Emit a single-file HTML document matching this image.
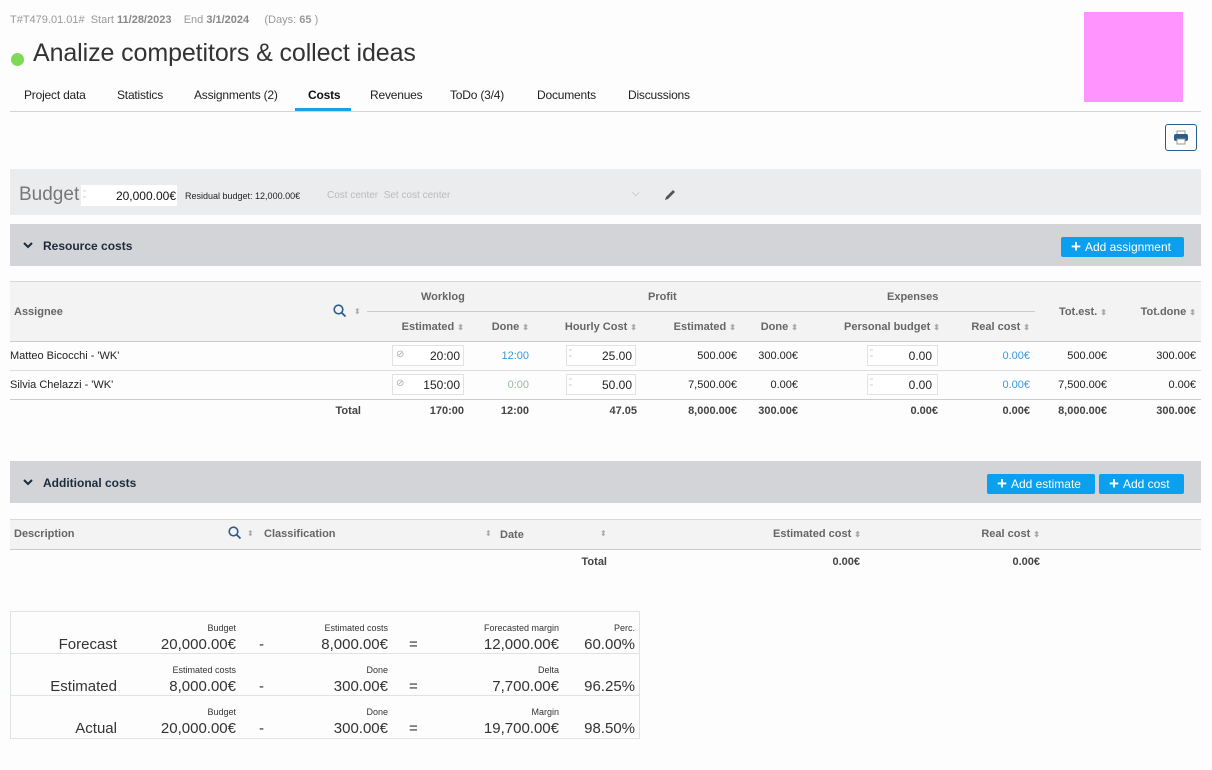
<!DOCTYPE html>
<html><head><meta charset="utf-8">
<style>
*{margin:0;padding:0;box-sizing:border-box}
body{width:1212px;height:770px;background:#fdfdfd;font-family:"Liberation Sans",Arial,sans-serif;position:relative;overflow:hidden;color:#222}
.a{position:absolute;white-space:nowrap}
.r{position:absolute;white-space:nowrap;text-align:right}
.h{font-size:11px;font-weight:bold;color:#666}
.c{font-size:11px;color:#222}
.sort{color:#aaa;font-size:8px}
.inp{position:absolute;background:#fff;border:1px solid #e2e2e2;height:21px}
.btn{position:absolute;background:#0aa0ef;color:#fff;font-size:12px;height:20px;line-height:20px;border-radius:2px;padding-left:10px}
.btn b{font-size:17px;font-weight:bold;vertical-align:-1px;margin-right:4px}
.line{position:absolute;height:1px;background:#ddd}
.sm{font-size:9px;color:#333}
.big{font-size:15px;color:#333}
</style></head><body>

<div class="a" style="left:10px;top:14px;font-size:11px;color:#999">T#T479.01.01# &nbsp;Start <b style="color:#888">11/28/2023</b> &nbsp;&nbsp;&nbsp;End <b style="color:#888">3/1/2024</b> &nbsp;&nbsp;&nbsp;&nbsp;(Days: <b>65</b> )</div>
<div class="a" style="left:11px;top:53px;width:13px;height:13px;border-radius:50%;background:#7ed957"></div>
<div class="a" style="left:33px;top:39px;font-size:25px;color:#333;letter-spacing:-0.1px">Analize competitors &amp; collect ideas</div>
<div class="a" style="left:1084px;top:12px;width:99px;height:90px;background:#ff94ff"></div>

<div class="a" style="left:24px;top:88px;font-size:12px;color:#222;letter-spacing:-0.2px">Project data</div>
<div class="a" style="left:117px;top:88px;font-size:12px;color:#222;letter-spacing:-0.2px">Statistics</div>
<div class="a" style="left:194px;top:88px;font-size:12px;color:#222;letter-spacing:-0.2px">Assignments (2)</div>
<div class="a" style="left:308px;top:88px;font-size:12px;color:#111;font-weight:bold;letter-spacing:-0.2px">Costs</div>
<div class="a" style="left:370px;top:88px;font-size:12px;color:#222;letter-spacing:-0.2px">Revenues</div>
<div class="a" style="left:450px;top:88px;font-size:12px;color:#222;letter-spacing:-0.2px">ToDo (3/4)</div>
<div class="a" style="left:537px;top:88px;font-size:12px;color:#222;letter-spacing:-0.2px">Documents</div>
<div class="a" style="left:628px;top:88px;font-size:12px;color:#222;letter-spacing:-0.2px">Discussions</div>
<div class="a" style="left:295px;top:108px;width:56px;height:3px;background:#1ea0e6"></div>
<div class="a" style="left:10px;top:111px;width:1191px;height:1px;background:#d4d4d4"></div>

<div class="a" style="left:1165px;top:124px;width:32px;height:27px;border:1px solid #2c5d8a;border-radius:3px"></div>
<svg class="a" style="left:1173px;top:130px" width="16" height="15" viewBox="0 0 16 15"><rect x="4" y="1" width="8" height="4" fill="#fff" stroke="#999"/><rect x="1" y="4" width="14" height="7" rx="2" fill="#2c5d8a"/><rect x="4" y="9" width="8" height="5" fill="#fff" stroke="#999"/></svg>

<div class="a" style="left:10px;top:169px;width:1191px;height:46px;background:#ebecee"></div>
<div class="a" style="left:19px;top:184px;font-size:19px;color:#777">Budget</div>
<div class="a" style="left:81px;top:185px;width:96px;height:21px;background:#fff"></div>
<div class="a" style="left:83px;top:189px;font-size:7px;color:#aaa;line-height:6px">▫<br>▫</div>
<div class="r" style="right:1036px;top:189px;font-size:12px;color:#111">20,000.00€</div>
<div class="a" style="left:185px;top:191px;font-size:9px;color:#222">Residual budget: 12,000.00€</div>
<div class="a" style="left:327px;top:190px;font-size:10px;color:#bbb">Cost center &nbsp;Set cost center</div>
<div class="a" style="left:632px;top:188px;font-size:10px;color:#aaa">⌵</div>
<svg class="a" style="left:663px;top:188px" width="14" height="14" viewBox="0 0 14 14"><path d="M2 12 L3 9 L10 2 L12 4 L5 11 Z" fill="#555"/></svg>

<div class="a" style="left:10px;top:224px;width:1191px;height:42px;background:#d3d4d8"></div>
<svg class="a" style="left:23px;top:242px" width="10" height="7" viewBox="0 0 10 7"><path d="M1 1 L5 5 L9 1" fill="none" stroke="#1c2b3a" stroke-width="2"/></svg>
<div class="a" style="left:43px;top:239px;font-size:12px;font-weight:bold;color:#1c2b3a">Resource costs</div>
<div class="btn" style="left:1061px;top:237px;width:123px"><b>+</b>Add assignment</div>

<div class="a" style="left:10px;top:281px;width:1191px;height:60px;background:#f3f3f3;border-top:1px solid #d8d8d8"></div>
<div class="a h" style="left:14px;top:306px">Assignee</div>
<svg class="a" style="left:333px;top:304px" width="14" height="14" viewBox="0 0 14 14"><circle cx="5.5" cy="5.5" r="4.3" fill="none" stroke="#2c5d8a" stroke-width="1.6"/><path d="M8.7 8.7 L12.5 12.5" stroke="#2c5d8a" stroke-width="1.8"/></svg>
<div class="a sort" style="left:354px;top:307px">⬍</div>
<div class="line" style="left:367px;top:311px;width:668px;background:#ccc"></div>
<div class="a h" style="left:421px;top:291px">Worklog</div>
<div class="a h" style="left:648px;top:291px">Profit</div>
<div class="a h" style="left:887px;top:291px">Expenses</div>
<div class="r h" style="right:748px;top:321px">Estimated <span class="sort">⬍</span></div>
<div class="r h" style="right:683px;top:321px">Done <span class="sort">⬍</span></div>
<div class="r h" style="right:575px;top:321px">Hourly Cost <span class="sort">⬍</span></div>
<div class="r h" style="right:476px;top:321px">Estimated <span class="sort">⬍</span></div>
<div class="r h" style="right:414px;top:321px">Done <span class="sort">⬍</span></div>
<div class="r h" style="right:272px;top:321px">Personal budget <span class="sort">⬍</span></div>
<div class="r h" style="right:182px;top:321px">Real cost <span class="sort">⬍</span></div>
<div class="r h" style="right:105px;top:306px">Tot.est. <span class="sort">⬍</span></div>
<div class="r h" style="right:16px;top:306px">Tot.done <span class="sort">⬍</span></div>
<div class="line" style="left:10px;top:341px;width:1191px;background:#ccc"></div>

<div class="a c" style="left:10px;top:350px">Matteo Bicocchi - 'WK'</div>
<div class="inp" style="left:392px;top:345px;width:72px"></div>
<div class="a" style="left:396px;top:349px;font-size:10px;color:#aaa">⊘</div>
<div class="r" style="right:752px;top:349px;font-size:12px">20:00</div>
<div class="r c" style="right:683px;top:350px;color:#3a9ad9">12:00</div>
<div class="inp" style="left:566px;top:345px;width:70px"></div>
<div class="a" style="left:569px;top:348px;font-size:7px;color:#aaa;line-height:6px">▫<br>▫</div>
<div class="r" style="right:580px;top:349px;font-size:12px">25.00</div>
<div class="r c" style="right:475px;top:350px">500.00€</div>
<div class="r c" style="right:414px;top:350px">300.00€</div>
<div class="inp" style="left:867px;top:345px;width:71px"></div>
<div class="a" style="left:870px;top:348px;font-size:7px;color:#aaa;line-height:6px">▫<br>▫</div>
<div class="r" style="right:280px;top:349px;font-size:12px">0.00</div>
<div class="r c" style="right:182px;top:350px;color:#3a9ad9">0.00€</div>
<div class="r c" style="right:105px;top:350px">500.00€</div>
<div class="r c" style="right:16px;top:350px">300.00€</div>
<div class="line" style="left:10px;top:370px;width:1191px"></div>

<div class="a c" style="left:10px;top:379px">Silvia Chelazzi - 'WK'</div>
<div class="inp" style="left:392px;top:374px;width:72px"></div>
<div class="a" style="left:396px;top:378px;font-size:10px;color:#aaa">⊘</div>
<div class="r" style="right:752px;top:378px;font-size:12px">150:00</div>
<div class="r c" style="right:683px;top:379px;color:#9ab89a">0:00</div>
<div class="inp" style="left:566px;top:374px;width:70px"></div>
<div class="a" style="left:569px;top:377px;font-size:7px;color:#aaa;line-height:6px">▫<br>▫</div>
<div class="r" style="right:580px;top:378px;font-size:12px">50.00</div>
<div class="r c" style="right:475px;top:379px">7,500.00€</div>
<div class="r c" style="right:414px;top:379px">0.00€</div>
<div class="inp" style="left:867px;top:374px;width:71px"></div>
<div class="a" style="left:870px;top:377px;font-size:7px;color:#aaa;line-height:6px">▫<br>▫</div>
<div class="r" style="right:280px;top:378px;font-size:12px">0.00</div>
<div class="r c" style="right:182px;top:379px;color:#3a9ad9">0.00€</div>
<div class="r c" style="right:105px;top:379px">7,500.00€</div>
<div class="r c" style="right:16px;top:379px">0.00€</div>
<div class="line" style="left:10px;top:399px;width:1191px;background:#ccc"></div>

<div class="r h" style="right:851px;top:405px;color:#444">Total</div>
<div class="r h" style="right:748px;top:405px;color:#444">170:00</div>
<div class="r h" style="right:683px;top:405px;color:#444">12:00</div>
<div class="r h" style="right:575px;top:405px;color:#444">47.05</div>
<div class="r h" style="right:475px;top:405px;color:#444">8,000.00€</div>
<div class="r h" style="right:414px;top:405px;color:#444">300.00€</div>
<div class="r h" style="right:274px;top:405px;color:#444">0.00€</div>
<div class="r h" style="right:182px;top:405px;color:#444">0.00€</div>
<div class="r h" style="right:105px;top:405px;color:#444">8,000.00€</div>
<div class="r h" style="right:16px;top:405px;color:#444">300.00€</div>

<div class="a" style="left:10px;top:461px;width:1191px;height:42px;background:#d3d4d8"></div>
<svg class="a" style="left:23px;top:479px" width="10" height="7" viewBox="0 0 10 7"><path d="M1 1 L5 5 L9 1" fill="none" stroke="#1c2b3a" stroke-width="2"/></svg>
<div class="a" style="left:43px;top:476px;font-size:12px;font-weight:bold;color:#1c2b3a">Additional costs</div>
<div class="btn" style="left:987px;top:474px;width:108px"><b>+</b>Add estimate</div>
<div class="btn" style="left:1099px;top:474px;width:85px"><b>+</b>Add cost</div>

<div class="a" style="left:10px;top:519px;width:1191px;height:31px;background:#f3f3f3;border-top:1px solid #d8d8d8;border-bottom:1px solid #ccc"></div>
<div class="a h" style="left:14px;top:528px">Description</div>
<svg class="a" style="left:228px;top:526px" width="14" height="14" viewBox="0 0 14 14"><circle cx="5.5" cy="5.5" r="4.3" fill="none" stroke="#2c5d8a" stroke-width="1.6"/><path d="M8.7 8.7 L12.5 12.5" stroke="#2c5d8a" stroke-width="1.8"/></svg>
<div class="a sort" style="left:247px;top:529px">⬍</div>
<div class="a h" style="left:264px;top:528px">Classification</div>
<div class="a sort" style="left:485px;top:529px">⬍</div>
<div class="a h" style="left:500px;top:529px">Date</div>
<div class="a sort" style="left:600px;top:529px">⬍</div>
<div class="r h" style="right:351px;top:528px">Estimated cost <span class="sort">⬍</span></div>
<div class="r h" style="right:172px;top:528px">Real cost <span class="sort">⬍</span></div>
<div class="r h" style="right:605px;top:556px;color:#444">Total</div>
<div class="r h" style="right:352px;top:556px;color:#444">0.00€</div>
<div class="r h" style="right:172px;top:556px;color:#444">0.00€</div>

<div class="a" style="left:10px;top:611px;width:630px;height:128px;border:1px solid #dde3e6"></div>
<div class="line" style="left:11px;top:653px;width:628px;background:#dde3e6"></div>
<div class="line" style="left:11px;top:695px;width:628px;background:#dde3e6"></div>

<div class="r sm" style="right:976px;top:623px">Budget</div>
<div class="r sm" style="right:824px;top:623px">Estimated costs</div>
<div class="r sm" style="right:653px;top:623px">Forecasted margin</div>
<div class="r sm" style="right:577px;top:623px">Perc.</div>
<div class="r big" style="right:1095px;top:636px">Forecast</div>
<div class="r big" style="right:976px;top:636px">20,000.00€</div>
<div class="a big" style="left:259px;top:636px">-</div>
<div class="r big" style="right:824px;top:636px">8,000.00€</div>
<div class="a big" style="left:409px;top:636px">=</div>
<div class="r big" style="right:653px;top:636px">12,000.00€</div>
<div class="r big" style="right:577px;top:636px">60.00%</div>

<div class="r sm" style="right:976px;top:665px">Estimated costs</div>
<div class="r sm" style="right:824px;top:665px">Done</div>
<div class="r sm" style="right:653px;top:665px">Delta</div>
<div class="r big" style="right:1095px;top:678px">Estimated</div>
<div class="r big" style="right:976px;top:678px">8,000.00€</div>
<div class="a big" style="left:259px;top:678px">-</div>
<div class="r big" style="right:824px;top:678px">300.00€</div>
<div class="a big" style="left:409px;top:678px">=</div>
<div class="r big" style="right:653px;top:678px">7,700.00€</div>
<div class="r big" style="right:577px;top:678px">96.25%</div>

<div class="r sm" style="right:976px;top:707px">Budget</div>
<div class="r sm" style="right:824px;top:707px">Done</div>
<div class="r sm" style="right:653px;top:707px">Margin</div>
<div class="r big" style="right:1095px;top:720px">Actual</div>
<div class="r big" style="right:976px;top:720px">20,000.00€</div>
<div class="a big" style="left:259px;top:720px">-</div>
<div class="r big" style="right:824px;top:720px">300.00€</div>
<div class="a big" style="left:409px;top:720px">=</div>
<div class="r big" style="right:653px;top:720px">19,700.00€</div>
<div class="r big" style="right:577px;top:720px">98.50%</div>

</body></html>
